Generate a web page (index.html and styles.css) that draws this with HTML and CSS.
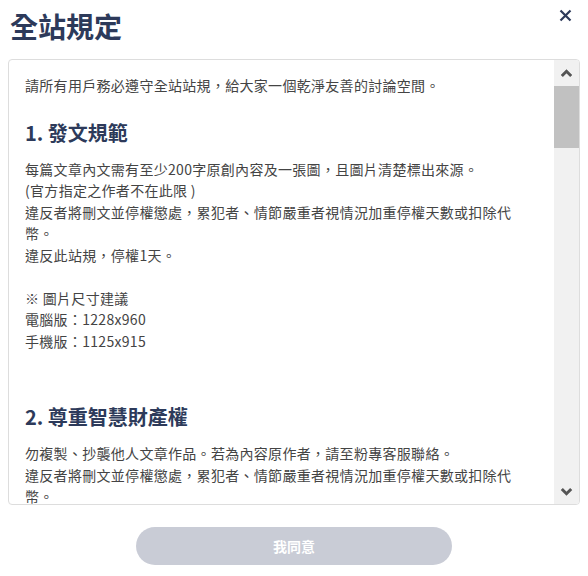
FILE: index.html
```html
<!DOCTYPE html>
<html lang="zh-Hant">
<head>
    <meta charset="UTF-8">
    <meta name="viewport" content="width=device-width, initial-scale=1.0">
    <title>全站規定</title>
    <link rel="stylesheet" href="styles.css">
</head>
<body>
    <div class="modal">
        <header class="modal-head">
            <h1>全站規定</h1>
            <button class="close" aria-label="關閉">
                <svg width="13" height="13" viewBox="0 0 13 13">
                    <path d="M1.5 1.5 L11.5 11.5 M11.5 1.5 L1.5 11.5" stroke="#2d3a5a" stroke-width="2.2" fill="none"/>
                </svg>
            </button>
        </header>

        <div class="rules">
            <div class="rules-text">
                <p class="intro">請所有用戶務必遵守全站站規，給大家一個乾淨友善的討論空間。</p>

                <h3>1. 發文規範</h3>
                <p class="section first">
                    每篇文章內文需有至少200字原創內容及一張圖，且圖片清楚標出來源。<br>
                    (官方指定之作者不在此限 )<br>
                    違反者將刪文並停權懲處，累犯者、情節嚴重者視情況加重停權天數或扣除代幣。<br>
                    違反此站規，停權1天。<br>
                    <br>
                    ※ 圖片尺寸建議<br>
                    電腦版：1228x960<br>
                    手機版：1125x915
                </p>

                <h3>2. 尊重智慧財產權</h3>
                <p class="section">
                    勿複製、抄襲他人文章作品。若為內容原作者，請至粉專客服聯絡。<br>
                    違反者將刪文並停權懲處，累犯者、情節嚴重者視情況加重停權天數或扣除代幣。
                </p>
            </div>

            <!-- 捲軸 -->
            <div class="scrollbar">
                <div class="arrow">
                    <svg width="13" height="9" viewBox="0 0 13 9">
                        <path d="M1.8 7 L6.5 2.3 L11.2 7" stroke="#555" stroke-width="3" fill="none"/>
                    </svg>
                </div>
                <div class="thumb"></div>
                <div class="track"></div>
                <div class="arrow">
                    <svg width="13" height="9" viewBox="0 0 13 9">
                        <path d="M1.8 2 L6.5 6.7 L11.2 2" stroke="#555" stroke-width="3" fill="none"/>
                    </svg>
                </div>
            </div>
        </div>

        <div class="actions">
            <button class="agree" disabled>我同意</button>
        </div>
    </div>
</body>
</html>
```

FILE: styles.css
```css
body {
    margin: 0;
    padding: 0;
    background-color: #fff;
    font-family: "Noto Sans CJK TC", "Noto Sans", sans-serif;
    color: #444;
}
.modal {
    width: 588px;
    height: 576px;
    display: flex;
    flex-direction: column;
}
.modal-head {
    height: 59px;
    display: flex;
    justify-content: space-between;
    align-items: flex-start;
    padding: 0 10px 0 10px;
    box-sizing: border-box;
}
.modal-head h1 {
    margin: 0;
    padding-top: 6px;
    font-size: 28px;
    line-height: 40px;
    font-weight: 700;
    color: #2d3a5a;
}
.close {
    background: none;
    border: none;
    padding: 0;
    margin: 9px 6px 0 0;
    cursor: pointer;
    line-height: 0;
}
.rules {
    margin: 0 8px 0 8px;
    height: 446px;
    border: 1px solid #ddd;
    border-radius: 4px;
    display: flex;
    overflow: hidden;
    box-sizing: border-box;
}
.rules-text {
    flex: 1;
    padding: 15px 40px 0 16px;
    font-size: 14px;
    line-height: 21.5px;
    letter-spacing: 0.3px;
    overflow: hidden;
}
.rules-text p {
    margin: 0;
}
.rules-text .intro {
    margin-bottom: 21px;
}
.rules-text h3 {
    margin: 0 0 11px 0;
    font-size: 20px;
    line-height: 30px;
    font-weight: 700;
    letter-spacing: 0;
    color: #2d3a5a;
}
.rules-text .section.first {
    margin-bottom: 50px;
}
.scrollbar {
    width: 25px;
    background-color: #f1f1f1;
    display: flex;
    flex-direction: column;
}
.scrollbar .arrow {
    height: 26px;
    display: flex;
    align-items: center;
    justify-content: center;
}
.scrollbar .thumb {
    height: 62px;
    background-color: #c1c1c1;
}
.scrollbar .track {
    flex: 1;
}
.actions {
    display: flex;
    justify-content: center;
    padding-top: 22px;
}
.agree {
    width: 316px;
    height: 38px;
    border: none;
    border-radius: 19px;
    background-color: #c9ccd6;
    color: #fff;
    font-family: "Noto Sans CJK TC", sans-serif;
    font-size: 14px;
    font-weight: 700;
}
```
